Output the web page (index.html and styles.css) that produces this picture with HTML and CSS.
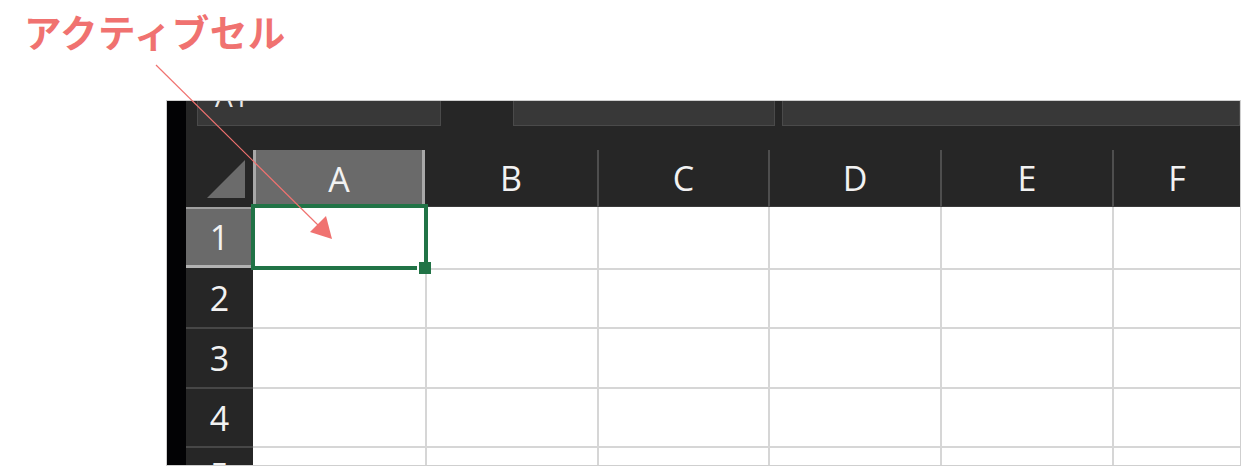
FILE: index.html
```html
<!DOCTYPE html>
<html lang="ja">
<head>
<meta charset="utf-8">
<title>アクティブセル</title>
<link rel="stylesheet" href="styles.css">
</head>
<body>
<div class="page">
  <h1 class="title">アクティブセル</h1>
  <div class="shot">
    <div class="edge"></div>
    <div class="app">
      <div class="toolbar">
        <div class="box namebox"><span class="nb-text">A1</span></div>
        <div class="box fbox1"></div>
        <div class="box fbox2"></div>
      </div>
      <div class="sheet">
        <div class="corner"></div>
        <div class="colhead sel">A</div>
        <div class="colhead">B</div>
        <div class="colhead">C</div>
        <div class="colhead">D</div>
        <div class="colhead">E</div>
        <div class="colhead">F</div>

        <div class="rowhead sel">1</div>
        <div class="cell first top"></div><div class="cell top"></div><div class="cell top"></div><div class="cell top"></div><div class="cell top"></div><div class="cell top"></div>

        <div class="rowhead">2</div>
        <div class="cell first"></div><div class="cell"></div><div class="cell"></div><div class="cell"></div><div class="cell"></div><div class="cell"></div>

        <div class="rowhead">3</div>
        <div class="cell first"></div><div class="cell"></div><div class="cell"></div><div class="cell"></div><div class="cell"></div><div class="cell"></div>

        <div class="rowhead">4</div>
        <div class="cell first"></div><div class="cell"></div><div class="cell"></div><div class="cell"></div><div class="cell"></div><div class="cell"></div>

        <div class="rowhead r5">5</div>
        <div class="cell first"></div><div class="cell"></div><div class="cell"></div><div class="cell"></div><div class="cell"></div><div class="cell"></div>

        <div class="active"><span class="handle"></span></div>
      </div>
    </div>
  </div>
  <svg class="annot" width="1243" height="468" viewBox="0 0 1243 468">
    <line x1="156" y1="65" x2="320" y2="227" stroke="#f07270" stroke-width="1.2"/>
    <polygon points="310,232 326,216 332,239" fill="#f07270"/>
  </svg>
</div>
</body>
</html>
```

FILE: styles.css
```css
html, body {
  margin: 0;
  padding: 0;
  background: #ffffff;
}

.page {
  position: relative;
  width: 1243px;
  height: 468px;
  overflow: hidden;
}

.title {
  margin: 0;
  height: 100px;
  box-sizing: border-box;
  padding: 11px 0 0 24px;
  font-family: "Noto Sans CJK JP", "Noto Sans", sans-serif;
  font-weight: 700;
  font-size: 37.5px;
  line-height: 40px;
  color: #f07270;
  letter-spacing: 0.5px;
}

.shot {
  margin-left: 166px;
  width: 1075px;
  height: 366px;
  box-sizing: border-box;
  border: 1px solid #cfcfcf;
  display: flex;
  overflow: hidden;
  background: #262626;
}

.edge {
  width: 19px;
  flex: none;
  background: #020204;
}

.app {
  flex: 1;
  display: flex;
  flex-direction: column;
  background: #262626;
  font-family: "Open Sans", "Noto Sans", sans-serif;
  color: #f2f2f2;
}

.toolbar {
  height: 25px;
  flex: none;
  display: flex;
  margin-bottom: 24px;
}

.box {
  height: 25px;
  box-sizing: border-box;
  background: #383838;
  border: 1px solid #4a4a4a;
  border-top: none;
  overflow: hidden;
}

.namebox {
  margin-left: 11px;
  width: 244px;
}

.nb-text {
  display: block;
  margin-top: -19px;
  margin-left: 17px;
  font-size: 28px;
  line-height: 28px;
  color: #e8e8e8;
}

.fbox1 {
  margin-left: 72px;
  width: 262px;
}

.fbox2 {
  margin-left: 7px;
  flex: 1;
}

.sheet {
  position: relative;
  display: grid;
  grid-template-columns: 67px 172px 172px 171px 172px 172px 1fr;
  grid-template-rows: 57px 61px 59px 60px 59px 60px;
}

.corner {
  position: relative;
  background: #262626;
}

.corner::after {
  content: "";
  position: absolute;
  left: 21px;
  top: 10px;
  width: 38px;
  height: 38px;
  background: #6b6b6b;
  clip-path: polygon(0 100%, 100% 0, 100% 100%);
}

.colhead {
  box-sizing: border-box;
  display: flex;
  align-items: center;
  justify-content: center;
  font-size: 34px;
  background: #262626;
  border-left: 2px solid #4e4e4e;
  border-bottom: 1px solid #3a3a3a;
}

.colhead.sel {
  background: #6a6a6a;
  border-left: 3px solid #a8a8a8;
  border-right: 3px solid #a8a8a8;
  border-bottom: none;
}

.colhead.sel + .colhead {
  border-left: none;
}

.rowhead {
  box-sizing: border-box;
  display: flex;
  align-items: center;
  justify-content: center;
  font-size: 34px;
  background: #262626;
  border-top: 2px solid #474747;
}

.rowhead.r5 {
  align-items: flex-start;
  padding-top: 4px;
}

.rowhead.sel {
  background: #6a6a6a;
  border-top: 2px solid #a0a0a0;
  border-bottom: 3px solid #b2b2b2;
}

.rowhead.sel + .cell + .cell + .cell + .cell + .cell + .cell + .rowhead {
  border-top: none;
}

.cell {
  box-sizing: border-box;
  background: #ffffff;
  border-left: 2px solid #d6d6d6;
  border-top: 2px solid #d6d6d6;
}

.cell.first {
  border-left: none;
}

.cell.top {
  border-top: none;
}

.active {
  position: absolute;
  left: 65px;
  top: 54px;
  width: 177px;
  height: 66px;
  box-sizing: border-box;
  border: 4px solid #217346;
}

.handle {
  position: absolute;
  left: 162px;
  top: 54px;
  width: 14px;
  height: 12px;
  box-sizing: border-box;
  background: #217346;
  border-left: 2px solid #ffffff;
}

.annot {
  position: absolute;
  left: 0;
  top: 0;
  pointer-events: none;
}
```
